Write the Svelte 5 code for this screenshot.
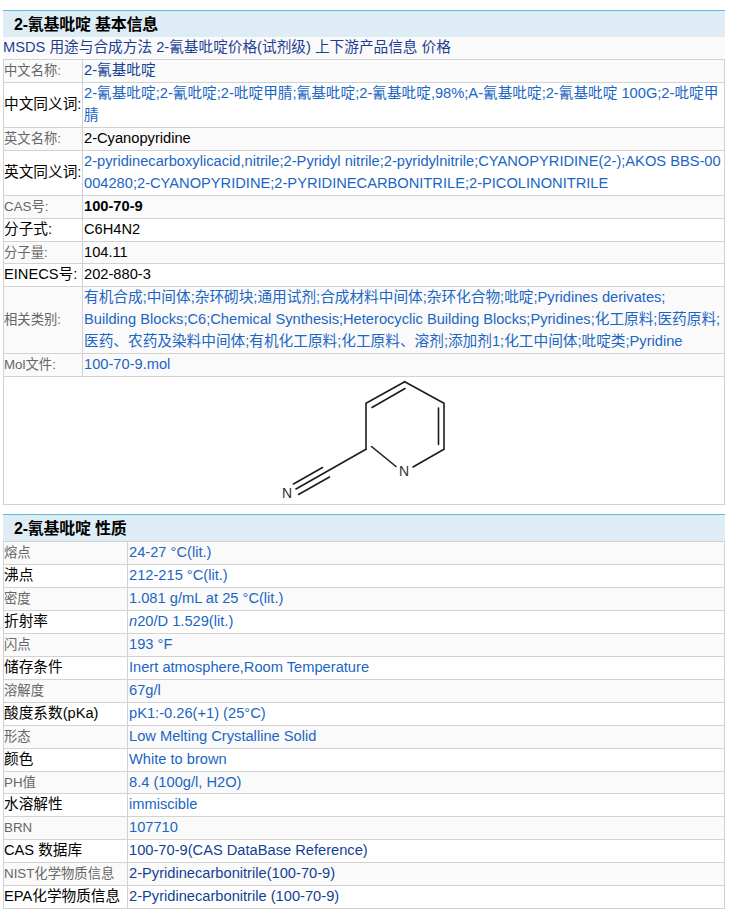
<script lang="ts">
  const nav = ['MSDS', '用途与合成方法', '2-氰基吡啶价格(试剂级)', '上下游产品信息', '价格'];

  const basic = [
    { k: '中文名称:', v: ['2-氰基吡啶'], c: 'dark' },
    { k: '中文同义词:', v: ['2-氰基吡啶;2-氰吡啶;2-吡啶甲腈;氰基吡啶;2-氰基吡啶,98%;A-氰基吡啶;2-氰基吡啶 100G;2-吡啶甲腈'], c: 'link' },
    { k: '英文名称:', v: ['2-Cyanopyridine'], c: '' },
    { k: '英文同义词:', v: ['2-pyridinecarboxylicacid,nitrile;2-Pyridyl nitrile;2-pyridylnitrile;CYANOPYRIDINE(2-);AKOS BBS-00004280;2-CYANOPYRIDINE;2-PYRIDINECARBONITRILE;2-PICOLINONITRILE'], c: 'link' },
    { k: 'CAS号:', v: ['100-70-9'], c: 'bold' },
    { k: '分子式:', v: ['C6H4N2'], c: '' },
    { k: '分子量:', v: ['104.11'], c: '' },
    { k: 'EINECS号:', v: ['202-880-3'], c: '' },
    {
      k: '相关类别:',
      v: [
        '有机合成;中间体;杂环砌块;通用试剂;合成材料中间体;杂环化合物;吡啶;Pyridines derivates;',
        'Building Blocks;C6;Chemical Synthesis;Heterocyclic Building Blocks;Pyridines;化工原料;医药原料;',
        '医药、农药及染料中间体;有机化工原料;化工原料、溶剂;添加剂1;化工中间体;吡啶类;Pyridine'
      ],
      c: 'link'
    },
    { k: 'Mol文件:', v: ['100-70-9.mol'], c: 'link', shade: true }
  ];

  const props = [
    ['熔点', '24-27 °C(lit.)', 'link'],
    ['沸点', '212-215 °C(lit.)', 'link'],
    ['密度', '1.081 g/mL at 25 °C(lit.)', 'link'],
    ['折射率', '20/D 1.529(lit.)', 'link', 'n'],
    ['闪点', '193 °F', 'link'],
    ['储存条件', 'Inert atmosphere,Room Temperature', 'link'],
    ['溶解度', '67g/l', 'link'],
    ['酸度系数(pKa)', 'pK1:-0.26(+1) (25°C)', 'link'],
    ['形态', 'Low Melting Crystalline Solid', 'link'],
    ['颜色', 'White to brown', 'link'],
    ['PH值', '8.4 (100g/l, H2O)', 'link'],
    ['水溶解性', 'immiscible', 'link'],
    ['BRN', '107710', 'link'],
    ['CAS 数据库', '100-70-9(CAS DataBase Reference)', 'dark'],
    ['NIST化学物质信息', '2-Pyridinecarbonitrile(100-70-9)', 'dark'],
    ['EPA化学物质信息', '2-Pyridinecarbonitrile (100-70-9)', 'dark']
  ];
</script>

<div class="page">
  <section>
    <h2>2-氰基吡啶 基本信息</h2>
    <nav>
      {#each nav as item}
        <a href="#top">{item}</a>{' '}
      {/each}
    </nav>
    <table class="basic">
      <tbody>
        {#each basic as row, i}
          <tr class:shade={i % 2 === 0 || row.shade}>
            <th>{row.k}</th>
            <td class={row.c}>
              {#each row.v as line, n}
                {#if n > 0}<br />{/if}{line}
              {/each}
            </td>
          </tr>
        {/each}
        <tr>
          <td class="mol" colspan="2">
            <svg viewBox="264 377 200 127" width="200" height="127" aria-label="2-氰基吡啶结构式">
              <g fill="none" stroke="#1c1c1c" stroke-width="1.6" stroke-linecap="round">
                <path d="M404.7 381.7 444 403.3V449.3L413 467" />
                <path d="M366 449.3V403.3L404.7 381.7" />
                <path d="M371.5 446.5 396 466.5" />
                <path d="M372 407.5 405 388.5" />
                <path d="M438.5 408V444.5" />
                <path d="M366 449.3 296 489" />
                <path d="M322.5 467.5 293.5 484" />
                <path d="M329.5 477 298.5 494.5" />
              </g>
              <text x="404" y="476" class="atom">N</text>
              <text x="287" y="498" class="atom">N</text>
            </svg>
          </td>
        </tr>
      </tbody>
    </table>
  </section>

  <section class="second">
    <h2>2-氰基吡啶 性质</h2>
    <table class="props">
      <tbody>
        {#each props as row, i}
          <tr class:shade={i % 2 === 0}>
            <th>{row[0]}</th>
            <td class={row[2]}>{#if row[3]}<i>{row[3]}</i>{/if}{row[1]}</td>
          </tr>
        {/each}
      </tbody>
    </table>
  </section>
</div>

<style>
  :global(body) {
    background: #fff;
  }

  .page {
    width: 722px;
    margin-left: 3px;
    padding-top: 10px;
    font-family: "Liberation Sans", "Noto Sans CJK SC", sans-serif;
    font-size: 11pt;
    line-height: 21.93px;
    color: #000;
  }

  .second {
    margin-top: 9px;
  }

  h2 {
    margin: 0;
    height: 26px;
    padding-left: 11px;
    border-top: 1px solid #5bbde4;
    background: #deedf5;
    font-size: 16px;
    line-height: 27px;
    font-weight: 700;
    letter-spacing: -0.25px;
  }

  nav {
    height: 22px;
    background: #fafafa;
  }

  a {
    color: #1c3f94;
    text-decoration: none;
  }

  table {
    width: 100%;
    border-collapse: collapse;
    table-layout: fixed;
  }

  .basic th {
    width: 78px;
  }

  .props th {
    width: 123px;
  }

  th,
  td {
    border: 1px solid #d2d2d2;
    padding: 0 0 0 1px;
    word-break: break-all;
  }

  th {
    padding-left: 0;
    font-weight: 400;
    text-align: left;
    white-space: nowrap;
  }

  tr.shade {
    background: #fafafa;
  }

  tr.shade th {
    font-size: 10pt;
    color: #666;
  }

  .link {
    color: #1a66c4;
  }

  .dark {
    color: #123f96;
  }

  .bold {
    font-weight: 700;
  }

  .mol {
    height: 127px;
    padding: 0;
    text-align: center;
    line-height: 0;
  }

  .atom {
    font-size: 14px;
    fill: #333;
    text-anchor: middle;
  }
</style>
